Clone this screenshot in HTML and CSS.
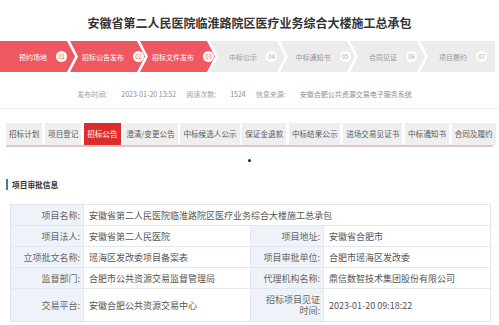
FILE: index.html
```html
<!DOCTYPE html>
<html lang="zh-CN">
<head>
    <meta charset="UTF-8">
    <meta name="viewport" content="width=device-width, initial-scale=1.0">
    <title>项目审批信息</title>
    <link rel="stylesheet" href="styles.css">
</head>
<body>
    <h1 class="title">安徽省第二人民医院临淮路院区医疗业务综合大楼施工总承包</h1>

    <div class="steps">
        <div class="step done first"><span class="step-name">预约场地</span><span class="step-no">01</span></div>
        <div class="step done"><span class="step-name">招标公告发布</span><span class="step-no">02</span></div>
        <div class="step done"><span class="step-name">招标文件发布</span><span class="step-no">03</span></div>
        <div class="step"><span class="step-name">中标公示</span><span class="step-no">04</span></div>
        <div class="step"><span class="step-name">中标通知书</span><span class="step-no">05</span></div>
        <div class="step"><span class="step-name">合同见证</span><span class="step-no">06</span></div>
        <div class="step last"><span class="step-name">项目履约</span><span class="step-no">07</span></div>
    </div>

    <div class="meta">
        <span class="meta-label">发布时间:</span><span class="meta-value">2023-01-20 13:52</span>
        <span class="meta-label">阅读次数:</span><span class="meta-value">1524</span>
        <span class="meta-label">信息来源:</span><span class="meta-value">安徽合肥公共资源交易电子服务系统</span>
    </div>

    <div class="divider"></div>

    <div class="tabs">
        <span class="tab">招标计划</span>
        <span class="tab">项目登记</span>
        <span class="tab active">招标公告</span>
        <span class="tab">澄清/变更公告</span>
        <span class="tab">中标候选人公示</span>
        <span class="tab">保证金退款</span>
        <span class="tab">中标结果公示</span>
        <span class="tab">进场交易见证书</span>
        <span class="tab">中标通知书</span>
        <span class="tab">合同及履约</span>
    </div>

    <div class="dot-row"><span class="dot"></span></div>

    <h2 class="section-title">项目审批信息</h2>

    <table class="info-table">
        <colgroup>
            <col class="col-label">
            <col class="col-value">
            <col class="col-label">
            <col class="col-value">
        </colgroup>
        <tr>
            <th>项目名称:</th>
            <td colspan="3">安徽省第二人民医院临淮路院区医疗业务综合大楼施工总承包</td>
        </tr>
        <tr>
            <th>项目法人:</th>
            <td>安徽省第二人民医院</td>
            <th>项目地址:</th>
            <td>安徽省合肥市</td>
        </tr>
        <tr>
            <th>立项批文名称:</th>
            <td>瑶海区发改委项目备案表</td>
            <th>项目审批单位:</th>
            <td>合肥市瑶海区发改委</td>
        </tr>
        <tr>
            <th>监督部门:</th>
            <td>合肥市公共资源交易监督管理局</td>
            <th>代理机构名称:</th>
            <td>鼎信数智技术集团股份有限公司</td>
        </tr>
        <tr class="tall">
            <th>交易平台:</th>
            <td>安徽合肥公共资源交易中心</td>
            <th>招标项目见证时间:</th>
            <td>2023-01-20 09:18:22</td>
        </tr>
    </table>
</body>
</html>
```

FILE: styles.css
```css
body {
    margin: 0;
    background-color: #fff;
    color: #333;
    font-family: "Noto Sans CJK SC", "Noto Sans", sans-serif;
}

.title {
    margin: 0;
    padding-top: 15px;
    font-size: 12px;
    line-height: 16px;
    font-weight: bold;
    text-align: center;
    color: #333;
}

/* progress steps */
.steps {
    display: flex;
    height: 31px;
    margin-top: 10px;
}

.step {
    flex-shrink: 0;
    width: 75px;
    margin-left: -5px;
    padding: 0 3px 0 14px;
    box-sizing: border-box;
    display: flex;
    align-items: center;
    justify-content: center;
    gap: 9px;
    background-color: #ececec;
    color: #999;
    font-size: 7px;
    white-space: nowrap;
    clip-path: polygon(0 0, calc(100% - 8px) 0, 100% 50%, calc(100% - 8px) 100%, 0 100%, 8px 50%);
}

.step.first {
    margin-left: 0;
    clip-path: polygon(0 0, calc(100% - 8px) 0, 100% 50%, calc(100% - 8px) 100%, 0 100%);
}

.step.last {
    clip-path: polygon(0 0, 100% 0, 100% 100%, 0 100%, 8px 50%);
}

.step.done {
    background-color: #ee5961;
    color: #fff;
}

.step-name {
    flex-shrink: 0;
}

.step-no {
    flex-shrink: 0;
    width: 11px;
    height: 11px;
    border-radius: 50%;
    background-color: #fff;
    color: #aaa;
    font-size: 6px;
    line-height: 11px;
    text-align: center;
}

.step.done .step-no {
    color: #ee5961;
}

/* publish info */
.meta {
    display: flex;
    justify-content: center;
    margin-top: 15px;
    height: 14px;
    line-height: 14px;
    font-size: 7px;
    color: #a0a0a0;
}

.meta-label {
    margin-right: 14px;
}

.meta-value {
    margin-right: 10px;
    color: #8c8c8c;
}

.divider {
    margin-top: 7px;
    height: 1px;
    background-color: #f0f0f0;
}

/* tabs */
.tabs {
    display: flex;
    gap: 2.7px;
    margin: 14px 6px 0 6px;
    border-bottom: 2px solid #dcc8ca;
}

.tab {
    height: 22px;
    line-height: 22px;
    padding: 0 3px;
    font-size: 7.6px;
    background-color: #efefef;
    color: #5a5a5a;
    white-space: nowrap;
}

.tab.active {
    background-color: #dc2c2c;
    color: #fff;
}

.dot-row {
    margin-top: 8px;
    height: 3px;
    text-align: center;
    line-height: 0;
}

.dot {
    display: inline-block;
    width: 3px;
    height: 3px;
    border-radius: 50%;
    background-color: #222;
}

/* approval info */
.section-title {
    margin: 21px 0 0 6px;
    padding-left: 4px;
    border-left: 2px solid #3a7ea8;
    height: 11px;
    line-height: 11px;
    font-size: 7.7px;
    font-weight: 600;
    color: #333;
}

.info-table {
    margin: 14px 0 0 10px;
    width: 480px;
    border-collapse: collapse;
    table-layout: fixed;
    font-size: 9px;
}

.col-label {
    width: 73px;
}

.col-value {
    width: 167px;
}

.info-table th,
.info-table td {
    height: 20px;
    border: 1px solid #e2e7ee;
    line-height: 11px;
}

.info-table th {
    padding: 0 3px 0 9px;
    background-color: #eef3f9;
    color: #666;
    font-weight: normal;
    text-align: right;
}

.info-table td {
    padding: 0 5px;
    color: #555;
    text-align: left;
}

.info-table tr.tall th,
.info-table tr.tall td {
    height: 32px;
}
```
